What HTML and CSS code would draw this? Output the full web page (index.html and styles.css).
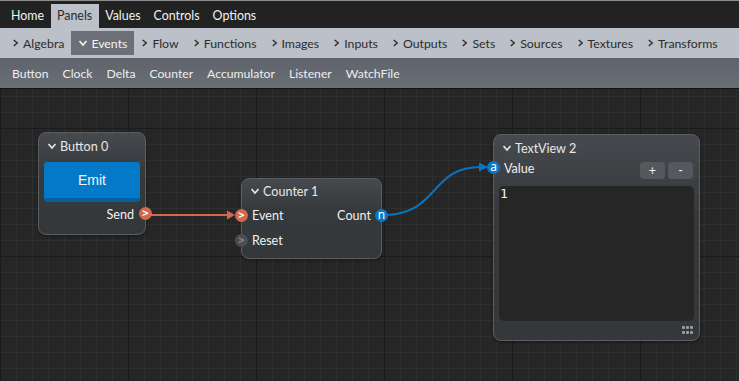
FILE: index.html
```html
<!DOCTYPE html>
<html lang="en">
<head>
  <meta charset="UTF-8">
  <title>Node editor</title>
  <link rel="stylesheet" href="styles.css">
</head>
<body>

  <div class="menubar">
    <div class="menu-item">Home</div>
    <div class="menu-item active">Panels</div>
    <div class="menu-item">Values</div>
    <div class="menu-item">Controls</div>
    <div class="menu-item">Options</div>
  </div>

  <div class="groupbar">
    <div class="group"><svg class="chev" viewBox="0 0 8 10"><path d="M2 1.5 L6 5 L2 8.5"/></svg>Algebra</div>
    <div class="group open"><svg class="chev down" viewBox="0 0 10 8"><path d="M1.5 2 L5 6 L8.5 2"/></svg>Events</div>
    <div class="group"><svg class="chev" viewBox="0 0 8 10"><path d="M2 1.5 L6 5 L2 8.5"/></svg>Flow</div>
    <div class="group"><svg class="chev" viewBox="0 0 8 10"><path d="M2 1.5 L6 5 L2 8.5"/></svg>Functions</div>
    <div class="group"><svg class="chev" viewBox="0 0 8 10"><path d="M2 1.5 L6 5 L2 8.5"/></svg>Images</div>
    <div class="group"><svg class="chev" viewBox="0 0 8 10"><path d="M2 1.5 L6 5 L2 8.5"/></svg>Inputs</div>
    <div class="group"><svg class="chev" viewBox="0 0 8 10"><path d="M2 1.5 L6 5 L2 8.5"/></svg>Outputs</div>
    <div class="group"><svg class="chev" viewBox="0 0 8 10"><path d="M2 1.5 L6 5 L2 8.5"/></svg>Sets</div>
    <div class="group"><svg class="chev" viewBox="0 0 8 10"><path d="M2 1.5 L6 5 L2 8.5"/></svg>Sources</div>
    <div class="group"><svg class="chev" viewBox="0 0 8 10"><path d="M2 1.5 L6 5 L2 8.5"/></svg>Textures</div>
    <div class="group"><svg class="chev" viewBox="0 0 8 10"><path d="M2 1.5 L6 5 L2 8.5"/></svg>Transforms</div>
  </div>

  <div class="toolbar">
    <div class="tool">Button</div>
    <div class="tool">Clock</div>
    <div class="tool">Delta</div>
    <div class="tool">Counter</div>
    <div class="tool">Accumulator</div>
    <div class="tool">Listener</div>
    <div class="tool">WatchFile</div>
  </div>

  <div class="canvas">
    <svg class="edges" width="739" height="292" viewBox="0 89 739 292">
      <line x1="151" y1="215" x2="229" y2="215" stroke="#d2694f" stroke-width="2"/>
      <path d="M227 210.5 L235 215 L227 219.5 Z" fill="#d2694f"/>
      <path d="M387 215 C 440 212, 430 167, 481 167" fill="none" stroke="#0a74c4" stroke-width="2"/>
      <path d="M479 162.5 L488 167 L479 171.5 Z" fill="#0a74c4"/>
    </svg>

    <div class="node node-button">
      <div class="node-title"><svg class="chev down" viewBox="0 0 10 8"><path d="M1.5 2 L5 6 L8.5 2"/></svg>Button 0</div>
      <div class="emit">Emit</div>
      <div class="row out">Send<span class="port event">&gt;</span></div>
    </div>

    <div class="node node-counter">
      <div class="node-title"><svg class="chev down" viewBox="0 0 10 8"><path d="M1.5 2 L5 6 L8.5 2"/></svg>Counter 1</div>
      <div class="row split">
        <span class="in"><span class="port event">&gt;</span>Event</span>
        <span class="out">Count<span class="port num">n</span></span>
      </div>
      <div class="row"><span class="in"><span class="port idle">&gt;</span>Reset</span></div>
    </div>

    <div class="node node-text">
      <div class="node-title"><svg class="chev down" viewBox="0 0 10 8"><path d="M1.5 2 L5 6 L8.5 2"/></svg>TextView 2</div>
      <div class="row value-row">
        <span class="in"><span class="port num">a</span>Value</span>
        <span class="zoom-btns"><span class="small-btn">+</span><span class="small-btn">-</span></span>
      </div>
      <div class="textarea">1</div>
      <div class="node-foot">
        <svg class="grip" width="11" height="8" viewBox="0 0 11 8">
          <rect x="0" y="0" width="3" height="3" rx="1"/><rect x="4" y="0" width="3" height="3" rx="1"/><rect x="8" y="0" width="3" height="3" rx="1"/>
          <rect x="0" y="5" width="3" height="3" rx="1"/><rect x="4" y="5" width="3" height="3" rx="1"/><rect x="8" y="5" width="3" height="3" rx="1"/>
        </svg>
      </div>
    </div>
  </div>

</body>
</html>
```

FILE: styles.css
```css
body {
  margin: 0;
  font-family: Lato, "Noto Sans", sans-serif;
  font-size: 12.2px;
  background: #262626;
  overflow: hidden;
}
.chev {
  width: 7px;
  height: 10px;
  fill: none;
  stroke: currentColor;
  stroke-width: 1.6;
  margin-right: 4px;
  flex-shrink: 0;
}
.chev.down {
  width: 10px;
  height: 8px;
  margin-right: 3px;
}

/* top menu */
.menubar {
  display: flex;
  height: 27px;
  padding: 0 5px;
  background: #222222;
  border-top: 1px solid #8c8c8c;
  align-items: flex-end;
}
.menu-item {
  height: 24px;
  line-height: 24px;
  padding: 0 7px 0 6px;
  color: #f2f2f2;
  font-size: 12.4px;
}
.menu-item.active {
  background: #bcc0c8;
  color: #2a2a2a;
}

/* groups */
.groupbar {
  display: flex;
  height: 30px;
  padding: 0 5px;
  align-items: center;
  background: #bcc0c8;
  color: #2c2c2c;
}
.group {
  display: flex;
  align-items: center;
  height: 24px;
  padding: 0 7px;
  font-size: 12.3px;
}
.group.open {
  background: #6b6f78;
  color: #f4f4f4;
}

/* tools */
.toolbar {
  display: flex;
  height: 30px;
  padding: 0 5px;
  align-items: center;
  background: linear-gradient(#5f636b, #6a6e77);
  color: #eeeeee;
  border-bottom: 1px solid #111;
}
.tool {
  padding: 0 7px;
}

/* canvas */
.canvas {
  position: relative;
  height: 292px;
  background-color: #262626;
  background-image:
    linear-gradient(to right, #1b1b1b 1px, transparent 1px),
    linear-gradient(to bottom, #1b1b1b 1px, transparent 1px),
    linear-gradient(to right, #2f2f2f 1px, transparent 1px),
    linear-gradient(to bottom, #2f2f2f 1px, transparent 1px);
  background-size: 128px 128px, 128px 128px, 16px 16px, 16px 16px;
  background-position: 0 39px, 0 39px, 0 7px, 0 7px;
}
.edges {
  position: absolute;
  left: 0;
  top: 0;
  z-index: 2;
  pointer-events: none;
}
.node {
  position: absolute;
  box-sizing: border-box;
  background: linear-gradient(#46494d, #36393c 40%, #35383b);
  border: 1px solid #5a5d62;
  border-radius: 8px;
  color: #f0f0f0;
  font-size: 12.6px;
  box-shadow: 0 1px 3px rgba(0, 0, 0, 0.4);
}
.node-title {
  display: flex;
  align-items: center;
  height: 26px;
  padding: 0 8px;
  color: #e8e8e8;
}
/* canvas starts at y = 89 */
.node-button {
  left: 38px;
  top: 43px;
  width: 108px;
  height: 103px;
}
.node-counter {
  left: 241px;
  top: 89px;
  width: 141px;
  height: 81px;
}
.node-counter .node-title {
  height: 24px;
}
.node-counter .row {
  height: 25px;
}
.node-text {
  left: 493px;
  top: 45px;
  width: 207px;
  height: 207px;
}
.emit {
  margin: 3px 5px 0;
  height: 36px;
  line-height: 36px;
  text-align: center;
  background: #0479c8;
  border-bottom: 4px solid #0560a2;
  border-radius: 3px;
  color: #f4f4f4;
  font-family: "Liberation Sans", Arial, sans-serif;
  font-size: 14px;
}
.row {
  position: relative;
  display: flex;
  align-items: center;
  height: 24px;
}
.row.out, .row .out {
  justify-content: flex-end;
}
.row.out {
  padding-right: 11px;
}
.row.split {
  justify-content: space-between;
}
.in, .out {
  display: flex;
  align-items: center;
}
.in {
  padding-left: 10px;
}
.out {
  padding-right: 10px;
}
.port {
  position: absolute;
  top: 50%;
  width: 13px;
  height: 13px;
  margin-top: -7px;
  border-radius: 50%;
  font-family: "Noto Sans", sans-serif;
  font-size: 11px;
  line-height: 12px;
  text-align: center;
  color: #fff;
  font-weight: bold;
  z-index: 3;
}
.in .port {
  left: -7px;
}
.out .port {
  right: -7px;
}
.row.out .port {
  right: -7px;
}
.port.event {
  background: #d2694f;
}
.port.num {
  background: #0a78c8;
  font-weight: normal;
  font-size: 12px;
}
.port.idle {
  background: #4a4d51;
  color: #8a8a8a;
}
.value-row {
  height: 20px;
  align-items: flex-start;
  justify-content: space-between;
  padding-right: 6px;
}
.value-row .in {
  height: 14px;
}
.value-row .port {
  top: 7px;
}
.zoom-btns {
  display: flex;
  gap: 3px;
  margin-top: 1px;
}
.small-btn {
  width: 25px;
  height: 17px;
  line-height: 17px;
  text-align: center;
  background: #55595e;
  border-radius: 4px;
  color: #f0f0f0;
}
.textarea {
  margin: 5px 5px 0;
  height: 135px;
  padding: 0 1px;
  box-sizing: border-box;
  background: #262626;
  border-radius: 5px;
  font-family: "DejaVu Sans Mono", monospace;
  font-size: 13px;
  line-height: 15px;
  color: #f0f0f0;
}
.node-foot {
  display: flex;
  justify-content: flex-end;
  padding: 5px 6px 0;
}
.grip {
  fill: #9a9ca0;
}
```
